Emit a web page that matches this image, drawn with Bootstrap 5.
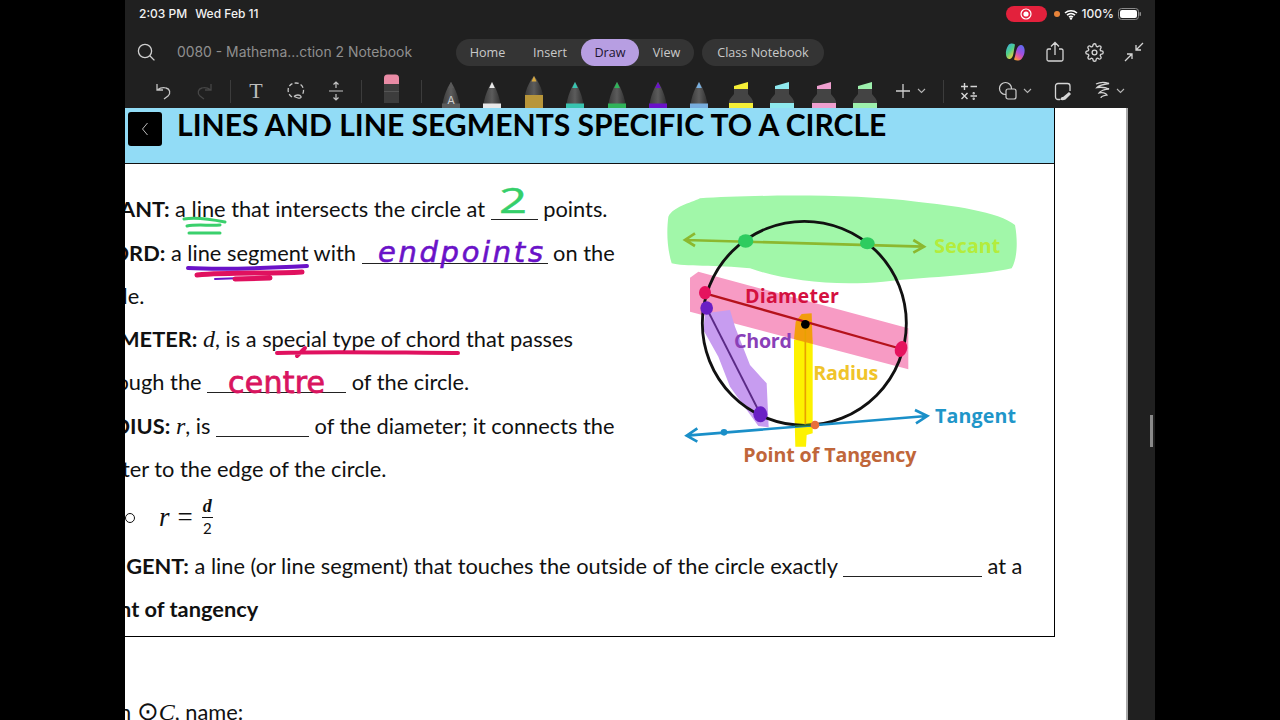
<!DOCTYPE html>
<html lang="en">
<head>
<meta charset="utf-8">
<title>Notebook</title>
<link rel="stylesheet" href="https://cdn.jsdelivr.net/npm/bootstrap@5.3.0/dist/css/bootstrap.min.css">
<style>
html,body{height:720px;overflow:hidden;background:#000;}
.pad-screen{width:1030px;height:720px;margin:0 auto;background:#202020;overflow:hidden;font-family:Inter,"Noto Sans",sans-serif;color:#ddd;}
.status-row{height:30px;padding:0 14px 2px;font-size:12px;font-weight:500;color:#f2f2f2;}
.rec-pill{width:41px;height:16px;background:#e3213c;margin-right:7px;}
.or-dot{width:6px;height:6px;background:#e8843a;}
.title-row{height:44px;padding:0 11px 0 11px;}
.doc-name{font-size:13.9px;color:#8f8f8f;margin-left:21px;width:279px;white-space:nowrap;}
.tab-group{background:#343434;height:27px;width:238px;}
.tab-btn{font-family:"Open Sans",sans-serif;font-size:12.6px;color:#c9c9c9;border:0;padding:0;height:27px;line-height:27px;text-align:center;background:transparent;}
.tab-a{width:63px;}.tab-b{width:62px;}.tab-c{width:58px;background:#b79ee2;color:#1c1430;}.tab-d{width:55px;}
.tab-e{width:122px;background:#343434;margin-left:8px;}
.right-icons{margin-left:auto;gap:20px;}
.tool-row{height:34px;padding-left:19px;}
.tslot{width:40px;height:34px;}
.pslot{width:41.4px;height:34px;}
.tdiv{width:1px;height:23px;background:#3c3c3c;}
.t-glyph{font-family:"Liberation Serif",serif;font-size:22px;line-height:1;color:#bdbdbd;}
.g4{margin-left:4.5px}.g5{margin-left:5px}.g55{margin-left:5.5px}.g6{margin-left:6px}.g8{margin-left:8.3px}.g9{margin-left:9px}.g10{margin-left:10.5px}.g11{margin-left:11px}.g16{margin-left:16.5px}.gr10{margin-right:10px}
.p-dim{color:#5a5a5a}.p-white{color:#e8e8e8}.p-teal{color:#38c4b0}.p-green{color:#2fb35a}.p-violet{color:#6a12c8}.p-blue{color:#78aede}
.h-yellow{color:#f5ef37}.h-cyan{color:#8fe9ee}.h-pink{color:#ef9fcf}.h-mint{color:#9df0ad}
.work{height:612px;}
.paper{width:1001px;height:612px;background:#fff;overflow:hidden;color:#111;font-family:Lato,"Liberation Sans",sans-serif;font-size:21.8px;}
.edge{width:2px;background:#a9a9a9;}
.rail{width:27px;}
.thumb{width:3px;height:32px;background:#8a8a8a;margin:307px 0 0 22px;}
.sheet{width:930px;height:529px;border-right:1px solid #000;border-bottom:1px solid #000;}
.banner{height:56px;background:#92dcf6;border-bottom:1px solid #111;padding-left:3px;}
.back-box{width:34px;height:34px;background:#000;border-radius:3px;margin-top:4px;}
.ban-title{font-weight:700;font-size:30.1px;line-height:32px;margin-left:15px;color:#000;white-space:nowrap;}
.left-col{width:525px;padding-top:23.3px;}
.ln{height:43.3px;line-height:43.3px;white-space:nowrap;}
.ln b{font-weight:700;}
.cut-ant{margin-left:-5px}.cut-ord{margin-left:-13.5px}.cut-le{margin-left:-2.5px}.cut-met{margin-left:-6px}.cut-ough{margin-left:-8.5px}.cut-dius{margin-left:-11.5px}.cut-ter{margin-left:-3px}.cut-ngent{margin-left:-15.6px}.cut-nt{margin-left:-6px}.cut-n{margin-left:-6px}
.cut-ant,.cut-ord,.cut-le,.cut-met,.cut-ough,.cut-dius,.cut-ter,.cut-ngent,.cut-nt,.cut-n{display:inline-block;}
.mth{font-family:"Liberation Serif",serif;font-style:italic;font-size:24px;}
.mth-eq{font-size:27px;line-height:1;}
.mth-odot{font-size:26px;line-height:1;}
.blank{display:inline-block;border-bottom:1.5px solid #222;margin-bottom:-3px;height:1px;}
.b47{width:47px}.b186{width:186px}.b139{width:139px}.b93{width:93px}
.fig{width:390px;height:300px;margin-top:16px;}
.eq-row{height:53.7px;}
.circ{width:10px;height:10px;border:1.5px solid #111;border-radius:50%;margin-top:2px;}
.frac{font-family:"Liberation Serif",serif;font-size:18px;line-height:17px;text-align:center;margin-left:9px;}
.frac i{display:block;border-bottom:1px solid #111;padding:0 1px 2px;font-weight:600;}
.frac span{display:block;padding-top:2px;font-size:15px;font-family:Lato,sans-serif;}
.ink-layer{left:0;top:0;width:1001px;height:612px;pointer-events:none;}
.below{margin-top:62px;line-height:26px;white-space:nowrap;}
.lbl{font-family:"Open Sans",sans-serif;font-weight:700;font-size:59px;}
</style>
</head>
<body>
<svg width="0" height="0" class="position-absolute">
  <defs>
    <linearGradient id="bodyg" x1="0" x2="1" y1="0" y2="0"><stop offset="0" stop-color="#3a3a3a"/><stop offset=".5" stop-color="#5c5c5c"/><stop offset="1" stop-color="#2e2e2e"/></linearGradient>
    <linearGradient id="copa" x1="0" x2=".6" y1="0" y2="1"><stop offset="0" stop-color="#38a8ee"/><stop offset=".55" stop-color="#4fd08a"/><stop offset="1" stop-color="#f2d13c"/></linearGradient>
    <linearGradient id="copb" x1=".8" x2=".3" y1="0" y2="1"><stop offset="0" stop-color="#5a6cf0"/><stop offset=".5" stop-color="#a24fe0"/><stop offset=".8" stop-color="#ee5f8c"/><stop offset="1" stop-color="#f59a3a"/></linearGradient>
    <symbol id="pen" viewBox="0 0 18 26">
      <path d="M0 26C1 15 5 6 9 0c4 6 8 15 9 26z" fill="url(#bodyg)"/>
      <path d="M6.200 6 9 0l2.800 6z" fill="currentColor"/>
      <rect x="0" y="21.500" width="18" height="4.500" fill="currentColor"/>
    </symbol>
    <symbol id="hil" viewBox="0 0 24 26">
      <path d="M0 26v-6c0-3 3-5 5-8V6h14v6c2 3 5 5 5 8v6z" fill="#444"/>
      <path d="M5 7V4l14-4v7z" fill="currentColor"/>
      <rect x="0" y="21" width="24" height="5" fill="currentColor"/>
    </symbol>
  </defs>
</svg>

<div class="pad-screen d-flex flex-column">
  <div class="status-row d-flex align-items-center">
    <span>2:03 PM</span><span class="ms-2">Wed Feb 11</span>
    <span class="ms-auto rec-pill rounded-pill d-flex align-items-center justify-content-center">
      <svg width="12" height="12" viewBox="0 0 12 12"><circle cx="6" cy="6" r="5" fill="none" stroke="#fff" stroke-width="1.200"/><circle cx="6" cy="6" r="2.600" fill="#fff"/></svg>
    </span>
    <span class="or-dot rounded-circle"></span>
    <svg class="ms-1" width="14" height="11" viewBox="0 0 14 11"><path d="M1 4a9 9 0 0 1 12 0M3 6.200a6 6 0 0 1 8 0M5 8.200a3 3 0 0 1 4 0" fill="none" stroke="#fff" stroke-width="1.600"/><circle cx="7" cy="9.600" r="1.200" fill="#fff"/></svg>
    <span class="ms-1">100%</span>
    <svg class="ms-1" width="23" height="12" viewBox="0 0 23 12"><rect x=".5" y=".5" width="20" height="11" rx="3" fill="none" stroke="#8a8a8a"/><rect x="2" y="2" width="17" height="8" rx="2" fill="#fff"/><rect x="21.500" y="4" width="1.500" height="4" rx=".7" fill="#8a8a8a"/></svg>
  </div>

  <div class="title-row d-flex align-items-center">
    <svg width="20" height="20" viewBox="0 0 20 20"><circle cx="9" cy="9" r="6.600" fill="none" stroke="#d0d0d0" stroke-width="1.300"/><path d="m13.800 13.800 4.600 4.600" stroke="#d0d0d0" stroke-width="1.300"/></svg>
    <span class="doc-name">0080 - Mathema...ction 2 Notebook</span>
    <div class="tab-group rounded-pill d-flex">
      <button class="btn rounded-pill tab-btn tab-a" type="button">Home</button>
      <button class="btn rounded-pill tab-btn tab-b" type="button">Insert</button>
      <button class="btn rounded-pill tab-btn tab-c" type="button">Draw</button>
      <button class="btn rounded-pill tab-btn tab-d" type="button">View</button>
    </div>
    <button class="btn rounded-pill tab-btn tab-e" type="button">Class Notebook</button>
    <div class="right-icons d-flex align-items-center">
      <svg width="20" height="20" viewBox="0 0 20 20"><path d="M10 2.500C8 1 5 1 3.500 3 1.500 5.500.5 9.500 1 13c.3 2.500 2 4.500 4 4 2-.5 3-3 3.500-6C9 8 9.500 5 10 2.500z" fill="url(#copa)"/><path d="M9 17.500c2 1.500 5.500 1.500 7.500-.5 2.500-3 3.500-6.500 3-10-.3-2.500-2-4.500-4-4-2.500.5-3.500 3-4.500 6.500C10.500 12 10 15 9 17.500z" fill="url(#copb)"/></svg>
      <svg width="20" height="22" viewBox="0 0 20 22"><path d="M6 8H3.500A1.500 1.500 0 0 0 2 9.500v9A1.500 1.500 0 0 0 3.500 20h13a1.500 1.500 0 0 0 1.500-1.500v-9A1.500 1.500 0 0 0 16.500 8H14M10 14V2M6 5.500 10 1.500l4 4" fill="none" stroke="#d5d5d5" stroke-width="1.300"/></svg>
      <svg width="19" height="19" viewBox="0 0 24 24" fill="none" stroke="#d5d5d5" stroke-width="1.700"><path d="M12 15a3 3 0 1 0 0-6 3 3 0 0 0 0 6z"/><path d="M19.400 15a1.650 1.650 0 0 0 .33 1.820l.06.06a2 2 0 0 1 0 2.830 2 2 0 0 1-2.830 0l-.06-.06a1.650 1.650 0 0 0-1.820-.33 1.650 1.650 0 0 0-1 1.510V21a2 2 0 0 1-2 2 2 2 0 0 1-2-2v-.09A1.650 1.650 0 0 0 9 19.400a1.650 1.650 0 0 0-1.820.33l-.06.06a2 2 0 0 1-2.830 0 2 2 0 0 1 0-2.830l.06-.06a1.650 1.650 0 0 0 .33-1.820 1.650 1.650 0 0 0-1.510-1H3a2 2 0 0 1-2-2 2 2 0 0 1 2-2h.09A1.650 1.650 0 0 0 4.600 9a1.650 1.650 0 0 0-.33-1.820l-.06-.06a2 2 0 0 1 0-2.830 2 2 0 0 1 2.830 0l.06.06a1.650 1.650 0 0 0 1.820.33H9a1.650 1.650 0 0 0 1-1.510V3a2 2 0 0 1 2-2 2 2 0 0 1 2 2v.09a1.650 1.650 0 0 0 1 1.510 1.650 1.650 0 0 0 1.820-.33l.06-.06a2 2 0 0 1 2.830 0 2 2 0 0 1 0 2.830l-.06.06a1.650 1.650 0 0 0-.33 1.820V9a1.650 1.650 0 0 0 1.510 1H21a2 2 0 0 1 2 2 2 2 0 0 1-2 2h-.09a1.650 1.650 0 0 0-1.510 1z"/></svg>
      <svg width="20" height="20" viewBox="0 0 20 20" fill="none" stroke="#d5d5d5" stroke-width="1.300"><path d="M19 1l-7 7M12 3v5h5M1 19l7-7M3 12h5v5"/></svg>
    </div>
  </div>

  <div class="tool-row d-flex align-items-center">
    <span class="tslot d-flex align-items-center justify-content-center"><svg width="18" height="18" viewBox="0 0 18 18" fill="none" stroke="#c4c4c4" stroke-width="1.300"><path d="M2 2v6h6M2 8c3-2 6-3 9-2 4 1 5 5 2 8l-4 3"/></svg></span>
    <span class="tslot d-flex align-items-center justify-content-center"><svg width="18" height="18" viewBox="0 0 18 18" fill="none" stroke="#464646" stroke-width="1.300"><path d="M16 2v6h-6M16 8c-3-2-6-3-9-2-4 1-5 5-2 8l4 3"/></svg></span>
    <span class="tdiv g6"></span>
    <span class="tslot d-flex align-items-center justify-content-center g5"><span class="t-glyph">T</span></span>
    <span class="tslot d-flex align-items-center justify-content-center"><svg width="18" height="18" viewBox="0 0 18 18" fill="none" stroke="#c4c4c4" stroke-width="1.300"><path d="M5 15C2 13 .8 10 1.200 7 2 3 5 1 9 1c4 0 7 3 7.500 6.500.3 2.500-.5 4.500-2 6" stroke-dasharray="4 2.200"/><path d="M7 14.500c2-2 6-2 7 0 .5 1.500-1.500 2-3 1.500l-4-1.500"/></svg></span>
    <span class="tslot d-flex align-items-center justify-content-center"><svg width="16" height="20" viewBox="0 0 16 20" fill="none" stroke="#c4c4c4" stroke-width="1.200"><path d="M1 10h14M8 1v6M5.500 3.500 8 1l2.500 2.500M8 13v6M5.500 16.500 8 19l2.500-2.500"/></svg></span>
    <span class="tdiv g5"></span>
    <span class="tslot d-flex align-self-end justify-content-center g9 gr10"><svg width="15" height="29" viewBox="0 0 15 29"><path d="M0 10V4a3.500 3.500 0 0 1 3.500-3.500h8A3.500 3.500 0 0 1 15 4v6z" fill="#e98ba5"/><rect y="10" width="15" height="19" fill="#3d3d3d"/><rect y="17" width="15" height="1" fill="#555"/></svg></span>
    <span class="tdiv"></span>
    <span class="pslot d-flex align-self-end justify-content-center align-items-end g8"><svg width="18" height="26" class="p-dim"><use href="#pen"/><text x="9" y="22" fill="#cfcfcf" font-size="11" text-anchor="middle" font-family="Inter,sans-serif">A</text></svg></span>
    <span class="pslot d-flex align-self-end justify-content-center align-items-end"><svg width="18" height="26" class="p-white"><use href="#pen"/></svg></span>
    <span class="pslot d-flex align-self-end justify-content-center align-items-end"><svg width="18" height="32" viewBox="0 0 18 32"><path d="M0 32V20C1 12 5 5 9 0c4 5 8 12 9 20v12z" fill="url(#bodyg)"/><path d="M6.500 5.500 9 0l2.500 5.500z" fill="#d9a93e"/><rect y="19" width="18" height="13" fill="#b8963a"/></svg></span>
    <span class="pslot d-flex align-self-end justify-content-center align-items-end"><svg width="18" height="26" class="p-teal"><use href="#pen"/></svg></span>
    <span class="pslot d-flex align-self-end justify-content-center align-items-end"><svg width="18" height="26" class="p-green"><use href="#pen"/></svg></span>
    <span class="pslot d-flex align-self-end justify-content-center align-items-end"><svg width="18" height="26" class="p-violet"><use href="#pen"/></svg></span>
    <span class="pslot d-flex align-self-end justify-content-center align-items-end"><svg width="18" height="26" class="p-blue"><use href="#pen"/></svg></span>
    <span class="pslot d-flex align-self-end justify-content-center align-items-end"><svg width="24" height="26" class="h-yellow"><use href="#hil"/></svg></span>
    <span class="pslot d-flex align-self-end justify-content-center align-items-end"><svg width="24" height="26" class="h-cyan"><use href="#hil"/></svg></span>
    <span class="pslot d-flex align-self-end justify-content-center align-items-end"><svg width="24" height="26" class="h-pink"><use href="#hil"/></svg></span>
    <span class="pslot d-flex align-self-end justify-content-center align-items-end"><svg width="24" height="26" class="h-mint"><use href="#hil"/></svg></span>
    <svg class="g8" width="18" height="18" viewBox="0 0 18 18" stroke="#cfcfcf" stroke-width="1.300"><path d="M9 2v14M2 9h14"/></svg>
    <svg class="g55" width="9" height="6" viewBox="0 0 9 6" fill="none" stroke="#b5b5b5" stroke-width="1.100"><path d="M1 1l3.500 3.500L8 1"/></svg>
    <span class="tdiv g16"></span>
    <span class="tslot d-flex align-items-center justify-content-center g5"><svg width="18" height="18" viewBox="0 0 18 18" fill="none" stroke="#d5d5d5" stroke-width="1.400"><path d="M1 4.500h7M4.500 1v7M10.500 4.500H17M1.500 11l6 6M7.500 11l-6 6M10.500 14H17"/><circle cx="13.700" cy="11.300" r=".5"/><circle cx="13.700" cy="16.700" r=".5"/></svg></span>
    <svg width="20" height="20" viewBox="0 0 20 20" fill="none" stroke="#cfcfcf" stroke-width="1.200" class="g9"><circle cx="7.500" cy="7.500" r="6"/><rect x="8" y="8" width="10" height="10" rx="2" fill="#202020"/></svg>
    <svg class="g55" width="9" height="6" viewBox="0 0 9 6" fill="none" stroke="#b5b5b5" stroke-width="1.100"><path d="M1 1l3.500 3.500L8 1"/></svg>
    <span class="tslot d-flex align-items-center justify-content-center g10"><svg width="18" height="19" viewBox="0 0 18 19" fill="none" stroke="#d5d5d5" stroke-width="1.300"><path d="M6 17.500H4a2.500 2.500 0 0 1-2.500-2.500V4A2.500 2.500 0 0 1 4 1.500h9.500A2.500 2.500 0 0 1 16 4v5"/><path d="M6 17.500c1-1.500 1.500-3 3-2.500l6-5 2 2-5.500 5.500c-2 1-4 1-5.500 0z" fill="#d5d5d5" stroke="none"/></svg></span>
    <svg class="g11" width="18" height="20" viewBox="0 0 18 20" fill="none" stroke="#d5d5d5" stroke-width="1.300"><path d="M2 3c4-2 9-2 13-.5-4 .5-10 2-12 4 4-.5 9 0 12 1.500-4 0-9 2-10 4 3-1 7 0 8 2-2 .5-6 1-6 3"/></svg>
    <svg class="g4" width="9" height="6" viewBox="0 0 9 6" fill="none" stroke="#b5b5b5" stroke-width="1.100"><path d="M1 1l3.500 3.500L8 1"/></svg>
  </div>

  <div class="work d-flex">
    <div class="paper position-relative">
      <div class="sheet d-flex flex-column">
        <div class="banner d-flex">
          <div class="back-box d-flex align-items-center justify-content-center">
            <svg width="8" height="14" viewBox="0 0 8 14" fill="none" stroke="#bbb" stroke-width="1"><path d="M6.500 1 1.500 7l5 6"/></svg>
          </div>
          <div class="ban-title">LINES AND LINE SEGMENTS SPECIFIC TO A CIRCLE</div>
        </div>
        <div class="d-flex">
          <div class="left-col">
            <div class="ln"><b class="cut-ant">ANT:</b> a line that intersects the circle at <span class="blank b47"></span> points.</div>
            <div class="ln"><b class="cut-ord">ORD:</b> a line segment with <span class="blank b186"></span> on the</div>
            <div class="ln"><span class="cut-le">le.</span></div>
            <div class="ln"><b class="cut-met">METER:</b> <span class="mth">d</span>, is a special type of chord that passes</div>
            <div class="ln"><span class="cut-ough">ough the</span> <span class="blank b139"></span> of the circle.</div>
            <div class="ln"><b class="cut-dius">DIUS:</b> <span class="mth">r</span>, is <span class="blank b93"></span> of the diameter; it connects the</div>
            <div class="ln"><span class="cut-ter">ter to the edge of the circle.</span></div>
            <div class="eq-row d-flex align-items-center">
              <span class="circ"></span>
              <span class="mth mth-eq ms-4">r</span><span class="mth mth-eq fst-normal ms-2">=</span>
              <span class="frac"><i>d</i><span>2</span></span>
            </div>
          </div>
          <svg class="fig" viewBox="0 0 1170 900" role="img" aria-label="Circle diagram">
            <path d="M55 110C70 80 120 70 150 55C300 45 600 40 800 65C900 75 1050 95 1095 135C1105 190 1100 240 1085 265C1000 285 850 290 700 305C550 320 400 300 300 265C200 255 100 260 65 250C50 200 50 150 55 110Z" fill="#a1f7a9"/>
            <path d="M120 293 145 275 775 445V568L120 395Z" fill="#f79bc4"/>
            <path d="M165 400 240 390 255 440 300 555 350 610 356 742 325 738 240 620 205 530 160 450Z" fill="#c79cf0"/>
            <path d="M432 480H488V760L470 765 468 800H436L432 650Z" fill="#fdf200"/>
            <path d="M437 425 455 402 485 400 488 492 432 478Z" fill="#f29d0c"/>
            <circle cx="463" cy="430" r="306" fill="none" stroke="#111" stroke-width="8.500"/>
            <path d="M105 180 820 200M135 160 105 180 135 198M790 180 822 200 790 218" fill="none" stroke="#8cb82f" stroke-width="8"/>
            <ellipse cx="287" cy="183" rx="23" ry="20" fill="#2ecc5f"/><ellipse cx="652" cy="190" rx="22" ry="18" fill="#2ecc5f"/>
            <text x="853" y="218" textLength="198" class="lbl" fill="#b4ec3c">Secant</text>
            <path d="M165 340 755 507" stroke="#b5121b" stroke-width="7"/>
            <path d="M466 433V735" stroke="#e8a100" stroke-width="5"/>
            <path d="M170 385 330 700" stroke="#5b2a86" stroke-width="6"/>
            <ellipse cx="165" cy="338" rx="18" ry="20" fill="#e5135e"/>
            <ellipse cx="753" cy="507" rx="18" ry="25" transform="rotate(20 753 507)" fill="#e5135e"/>
            <ellipse cx="170" cy="384" rx="19" ry="20" fill="#6a1fc4"/><ellipse cx="331" cy="703" rx="21" ry="24" fill="#6a1fc4"/>
            <circle cx="466" cy="433" r="13" fill="#000"/>
            <text x="285" y="368" textLength="282" class="lbl" fill="#d4103f">Diameter</text>
            <text x="252" y="503" textLength="174" class="lbl" fill="#8a3fb8">Chord</text>
            <text x="490" y="600" textLength="195" class="lbl" fill="#f0c42a">Radius</text>
            <path d="M110 767 830 708M142 745 110 767 142 785M795 690 832 708 798 730" fill="none" stroke="#1a8fc8" stroke-width="8"/>
            <path d="M435 738 485 735" stroke="#2b6a2b" stroke-width="6"/>
            <circle cx="222" cy="757" r="10" fill="#1a8fc8"/><circle cx="495" cy="735" r="13" fill="#e8703a"/>
            <text x="855" y="730" textLength="243" class="lbl" fill="#1f96c9">Tangent</text>
            <text x="280" y="845" textLength="519" class="lbl" fill="#c0663a">Point of Tangency</text>
          </svg>
        </div>
        <div class="ln"><b class="cut-ngent">NGENT:</b> a line (or line segment) that touches the outside of the circle exactly <span class="blank b139"></span> at a</div>
        <div class="ln"><b class="cut-nt">nt of tangency</b></div>
      </div>
      <div class="below"><span class="cut-n">n</span> <span class="mth mth-odot fst-normal">⊙</span><span class="mth">C</span>, name:</div>
      <svg class="ink-layer position-absolute" viewBox="125 108 1001 612">
        <g fill="none" stroke-linecap="round">
          <g stroke="#3ad06c" stroke-width="3"><path d="M184 219C195 217 215 220 225 222"/><path d="M187 226C197 224 210 226 220 225"/><path d="M189 233H220"/></g>
          <path d="M188 268C225 270 270 268 307 266" stroke="#6a12c8" stroke-width="4"/>
          <path d="M215 279 270 277" stroke="#6a12c8" stroke-width="2"/>
          <path d="M197 275C230 272 270 274 302 272M235 279 270 278" stroke="#e0115f" stroke-width="5"/>
          <path d="M277 353C330 351 410 353 458 353M305 348 297 356" stroke="#e0115f" stroke-width="4"/>
        </g>
        <text transform="translate(499 213) scale(1.400 1)" font-size="35" fill="#35cf6a" stroke="#35cf6a" stroke-width=".5" font-family="Open Sans,sans-serif">2</text>
        <text x="378" y="262" font-size="29" fill="#6a12c8" stroke="#6a12c8" stroke-width=".6" font-style="italic" font-family="DejaVu Sans,sans-serif" textLength="165">endpoints</text>
        <text x="228" y="393" font-size="30" fill="#d9155f" stroke="#d9155f" stroke-width=".8" font-family="DejaVu Sans,sans-serif" textLength="97">centre</text>
      </svg>
    </div>
    <div class="edge"></div>
    <div class="rail"><div class="thumb"></div></div>
  </div>
</div>
<script src="https://cdn.jsdelivr.net/npm/bootstrap@5.3.0/dist/js/bootstrap.bundle.min.js"></script>
</body>
</html>
